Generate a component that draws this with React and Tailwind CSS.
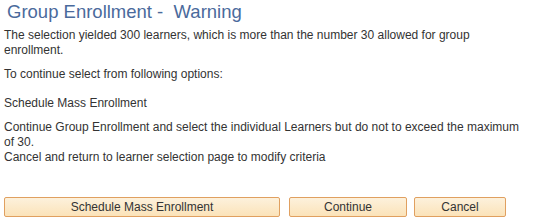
import React from 'react';

const btn =
  "h-[20px] border border-[#e0a060] rounded-[2px] bg-gradient-to-b from-[#fdf1dc] to-[#fbe3b9] text-[12px] text-[#333] leading-none";

export default function App() {
  return (
    <div className="w-[535px] h-[220px] bg-white font-['Liberation_Sans',Arial,sans-serif] text-[12px] text-[#333] pl-[4px]">
      <h1 className="pl-[3px] text-[18.5px] leading-[23px] text-[#4a6a9c]">
        Group Enrollment -&nbsp; Warning
      </h1>
      <div className="w-[520px]">
        <p className="mt-[5px] leading-[15px]">
          The selection yielded 300 learners, which is more than the number 30 allowed for group enrollment.
        </p>
        <p className="mt-[9px] leading-[15px]">To continue select from following options:</p>
        <p className="mt-[14px] leading-[15px]">Schedule Mass Enrollment</p>
        <p className="mt-[9px] leading-[15px]">
          Continue Group Enrollment and select the individual Learners but do not to exceed the maximum of 30.
        </p>
        <p className="leading-[15px]">Cancel and return to learner selection page to modify criteria</p>
      </div>
      <div className="mt-[32px] flex items-center">
        <button className={`${btn} w-[276px]`}>Schedule Mass Enrollment</button>
        <button className={`${btn} w-[118px] ml-[9px]`}>Continue</button>
        <button className={`${btn} w-[92px] ml-[7px]`}>Cancel</button>
      </div>
    </div>
  );
}
